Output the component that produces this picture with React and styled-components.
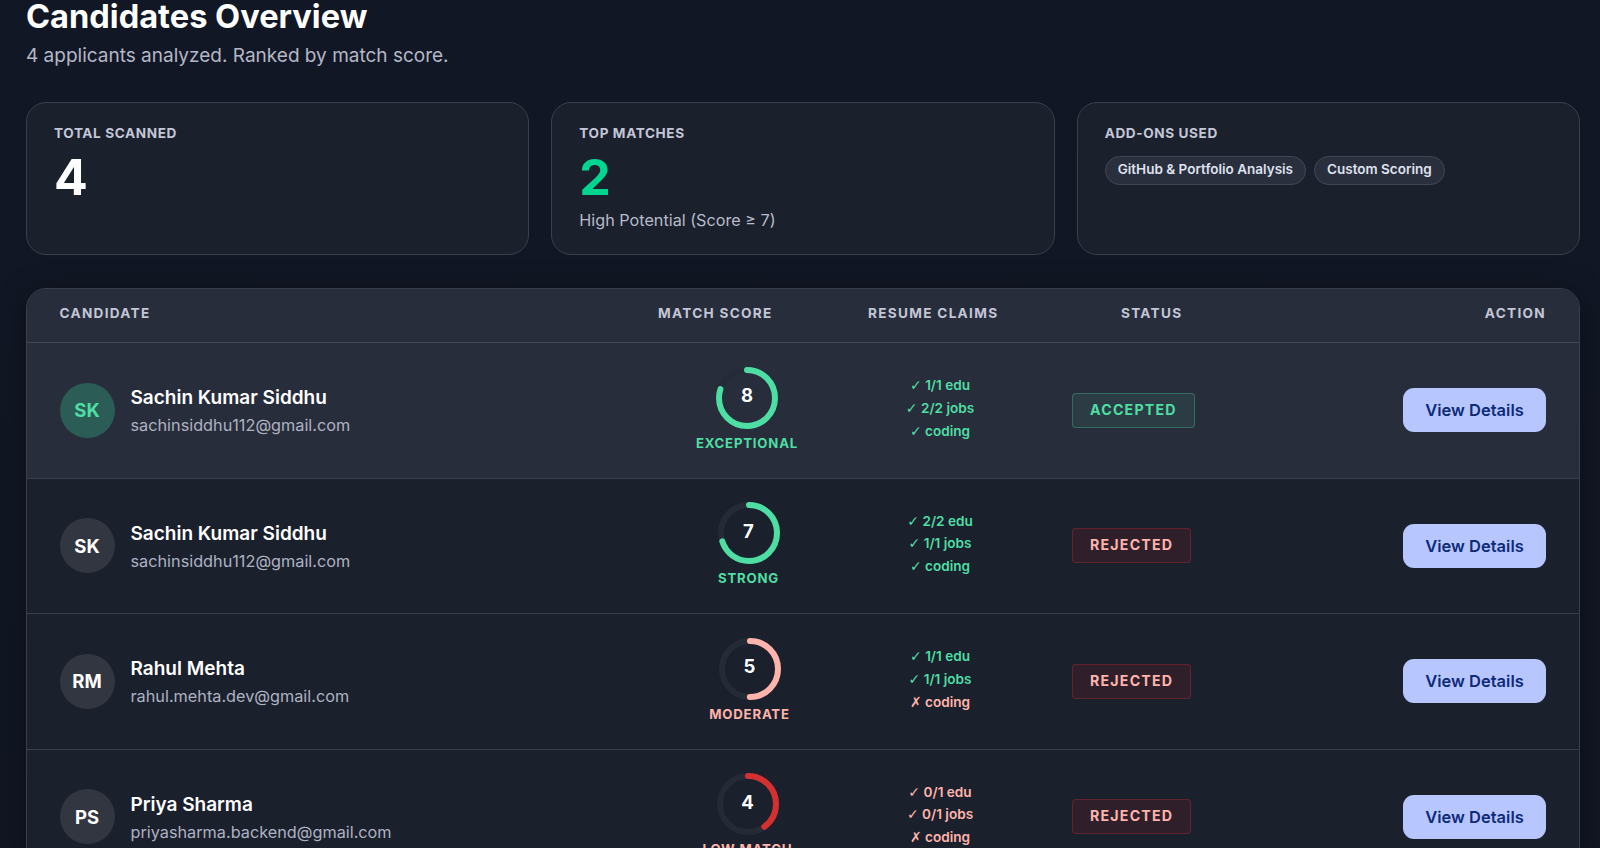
import React from 'react';
import styled, { createGlobalStyle } from 'styled-components';

const Global = createGlobalStyle`
  html, body { margin: 0; padding: 0; height: 848px; overflow: hidden; background: #101522; }
  body { font-family: Inter, "Noto Sans", "DejaVu Sans", sans-serif; color: #e1e2ec; -webkit-font-smoothing: antialiased; }
  * { box-sizing: border-box; }
`;

const Page = styled.main`
  height: 848px;
  overflow: hidden;
  padding: 0 20px 0 26px;
  background: linear-gradient(180deg, #121726 0%, #111623 100%);
`;
const Title = styled.h1`
  margin: 0;
  font-size: 32.6px;
  line-height: 32px;
  font-weight: 700;
  color: #fff;
`;
const Subtitle = styled.p`
  margin: 11px 0 0;
  font-size: 19px;
  line-height: 26px;
  color: #b4b8c6;
`;
const Cards = styled.section`
  display: grid;
  grid-template-columns: repeat(3, 1fr);
  gap: 22px;
  margin-top: 33px;
`;
const Card = styled.article`
  height: 153px;
  padding: 21px 27px;
  background: #1b202d;
  border: 1px solid #3a3f4d;
  border-radius: 20px;
`;
const CardLabel = styled.div`
  font-size: 13.6px;
  line-height: 18px;
  font-weight: 700;
  letter-spacing: 0.6px;
  text-transform: uppercase;
  color: #c3c6d7;
`;
const CardValue = styled.div`
  font-size: 50px;
  line-height: 60px;
  margin-top: 5px;
  font-weight: 700;
  color: ${p => p.$accent ? '#00d68f' : '#fff'};
`;
const CardNote = styled.div`
  font-size: 16.2px;
  line-height: 24px;
  margin-top: 1px;
  color: #b8bbc9;
`;
const Pills = styled.div`
  display: flex;
  gap: 8px;
  margin-top: 14px;
`;
const Pill = styled.span`
  height: 29px;
  padding: 0 12px 3px;
  display: inline-flex;
  align-items: center;
  font-size: 13.5px;
  font-weight: 600;
  color: #dfe2f0;
  background: #2a2f3d;
  border: 1px solid #434655;
  border-radius: 15px;
`;
const Table = styled.section`
  margin-top: 33px;
  border: 1px solid #3a3f4d;
  border-radius: 20px;
  overflow: hidden;
  background: #1b202d;
  box-shadow: 0 6px 30px rgba(0, 0, 0, 0.35);
`;
const columns = '598.5px 210px 204px 1fr 143px';
const Head = styled.div`
  display: grid;
  grid-template-columns: ${columns};
  align-items: center;
  height: 54px;
  padding: 0 33px 5px 32.5px;
  background: #282d3b;
  border-bottom: 1px solid #434655;
`;
const HeadCell = styled.div`
  font-size: 13.6px;
  font-weight: 700;
  letter-spacing: 1.3px;
  text-transform: uppercase;
  color: #c3c6d7;
  text-align: ${p => p.$right ? 'right' : 'left'};
  padding-left: ${p => p.$inset || 0}px;
`;
const Row = styled.div`
  display: grid;
  grid-template-columns: ${columns};
  align-items: center;
  height: 135.5px;
  padding: 0 33px 0 32.5px;
  background: ${p => p.$active ? '#282d3b' : '#1b202d'};
  border-bottom: 1px solid #3a3f4d;
`;
const Person = styled.div`
  display: flex;
  align-items: center;
  gap: 16px;
`;
const Avatar = styled.div`
  width: 55px;
  height: 55px;
  border-radius: 50%;
  display: flex;
  align-items: center;
  justify-content: center;
  font-size: 18.5px;
  font-weight: 700;
  color: ${p => p.$active ? '#4edea3' : '#fff'};
  background: ${p => p.$active ? '#2b5c56' : '#323640'};
`;
const PersonText = styled.div`
  padding-top: 2px;
`;
const Name = styled.div`
  font-size: 19px;
  line-height: 26px;
  font-weight: 600;
  color: #fff;
`;
const Email = styled.div`
  font-size: 16.25px;
  line-height: 24px;
  margin-top: 2px;
  color: #aeb2c2;
`;
const ScoreCell = styled.div`
  width: 178px;
  margin-top: -3px;
  padding-left: ${p => p.$nudge}px;
  display: flex;
  flex-direction: column;
  align-items: center;
`;
const Ring = styled.div`
  position: relative;
  width: 62px;
  height: 62px;
`;
const RingValue = styled.span`
  position: absolute;
  inset: 0 0 5px 0;
  display: flex;
  align-items: center;
  justify-content: center;
  font-size: 18.5px;
  font-weight: 700;
  color: #fff;
`;
const ScoreLabel = styled.div`
  margin-top: 6px;
  font-size: 13.2px;
  line-height: 16px;
  font-weight: 700;
  letter-spacing: 0.8px;
  text-transform: uppercase;
  white-space: nowrap;
  color: ${p => p.$color};
`;
const Claims = styled.div`
  width: 144px;
  margin-top: -4px;
  text-align: center;
`;
const Claim = styled.div`
  font-size: 13.6px;
  line-height: 22.6px;
  font-weight: 600;
  color: ${p => p.$ok ? '#4edea3' : '#ffb4ab'};
`;
const ClaimMark = styled.span`
  font-family: "DejaVu Sans", sans-serif;
  font-size: 14px;
  font-weight: 700;
`;
const StatusCell = styled.div`
  display: flex;
`;
const Badge = styled.span`
  height: 35px;
  padding: 0 17px 2px;
  display: inline-flex;
  align-items: center;
  font-size: 14.2px;
  font-weight: 700;
  letter-spacing: 1.2px;
  border-radius: 4px;
  color: ${p => p.$ok ? '#4edea3' : '#ffb4ab'};
  background: ${p => p.$ok ? 'rgba(78, 222, 163, 0.09)' : 'rgba(147, 30, 40, 0.16)'};
  border: 1px solid ${p => p.$ok ? 'rgba(78, 222, 163, 0.3)' : 'rgba(180, 40, 50, 0.4)'};
`;
const ActionCell = styled.div`
  display: flex;
  justify-content: flex-end;
`;
const Button = styled.button`
  width: 143px;
  height: 44px;
  border: none;
  border-radius: 11px;
  background: #b7c6ff;
  color: #0f2a78;
  font-family: inherit;
  font-size: 16.5px;
  font-weight: 600;
`;

const GREEN = '#4edea3';
const PINK = '#ffb4ab';
const RED = '#d3302f';

function ScoreRing({ score, color }) {
  const r = 28;
  const c = 2 * Math.PI * r;
  return (
    <Ring>
      <svg width="62" height="62" viewBox="0 0 62 62">
        <circle cx="31" cy="31" r={r} fill="none" stroke="#252a37" strokeWidth="6" />
        <circle
          cx="31" cy="31" r={r} fill="none" stroke={color} strokeWidth="6" strokeLinecap="round"
          strokeDasharray={`${c * score / 10} ${c}`}
          transform="rotate(-90 31 31)"
        />
      </svg>
      <RingValue>{score}</RingValue>
    </Ring>
  );
}

const rows = [
  { initials: 'SK', name: 'Sachin Kumar Siddhu', email: 'sachinsiddhu112@gmail.com', score: 8, label: 'Exceptional', color: GREEN, nudge: 0, active: true,
    claims: [['✓', '1/1 edu', 1], ['✓', '2/2 jobs', 1], ['✓', 'coding', 1]], status: 'ACCEPTED' },
  { initials: 'SK', name: 'Sachin Kumar Siddhu', email: 'sachinsiddhu112@gmail.com', score: 7, label: 'Strong', color: GREEN, nudge: 3,
    claims: [['✓', '2/2 edu', 1], ['✓', '1/1 jobs', 1], ['✓', 'coding', 1]], status: 'REJECTED' },
  { initials: 'RM', name: 'Rahul Mehta', email: 'rahul.mehta.dev@gmail.com', score: 5, label: 'Moderate', color: PINK, labelColor: PINK, nudge: 5,
    claims: [['✓', '1/1 edu', 1], ['✓', '1/1 jobs', 1], ['✗', 'coding', 0]], status: 'REJECTED' },
  { initials: 'PS', name: 'Priya Sharma', email: 'priyasharma.backend@gmail.com', score: 4, label: 'Low Match', color: RED, labelColor: PINK, nudge: 1,
    claims: [['✓', '0/1 edu', 0], ['✓', '0/1 jobs', 0], ['✗', 'coding', 0]], status: 'REJECTED' },
];

export default function App() {
  return (
    <Page>
      <Global />
      <Title>Candidates Overview</Title>
      <Subtitle>4 applicants analyzed. Ranked by match score.</Subtitle>
      <Cards>
        <Card>
          <CardLabel>Total Scanned</CardLabel>
          <CardValue>4</CardValue>
        </Card>
        <Card>
          <CardLabel>Top Matches</CardLabel>
          <CardValue $accent>2</CardValue>
          <CardNote>High Potential (Score ≥ 7)</CardNote>
        </Card>
        <Card>
          <CardLabel>Add-ons Used</CardLabel>
          <Pills>
            <Pill>GitHub &amp; Portfolio Analysis</Pill>
            <Pill>Custom Scoring</Pill>
          </Pills>
        </Card>
      </Cards>
      <Table>
        <Head>
          <HeadCell>Candidate</HeadCell>
          <HeadCell>Match Score</HeadCell>
          <HeadCell>Resume Claims</HeadCell>
          <HeadCell $inset={49}>Status</HeadCell>
          <HeadCell $right>Action</HeadCell>
        </Head>
        {rows.map((row, i) => (
          <Row key={i} $active={row.active}>
            <Person>
              <Avatar $active={row.active}>{row.initials}</Avatar>
              <PersonText>
                <Name>{row.name}</Name>
                <Email>{row.email}</Email>
              </PersonText>
            </Person>
            <ScoreCell $nudge={row.nudge}>
              <ScoreRing score={row.score} color={row.color} />
              <ScoreLabel $color={row.labelColor || row.color}>{row.label}</ScoreLabel>
            </ScoreCell>
            <Claims>
              {row.claims.map(([mark, text, ok]) => <Claim key={text} $ok={!!ok}><ClaimMark>{mark}</ClaimMark> {text}</Claim>)}
            </Claims>
            <StatusCell><Badge $ok={row.status === 'ACCEPTED'}>{row.status}</Badge></StatusCell>
            <ActionCell><Button>View Details</Button></ActionCell>
          </Row>
        ))}
      </Table>
    </Page>
  );
}
